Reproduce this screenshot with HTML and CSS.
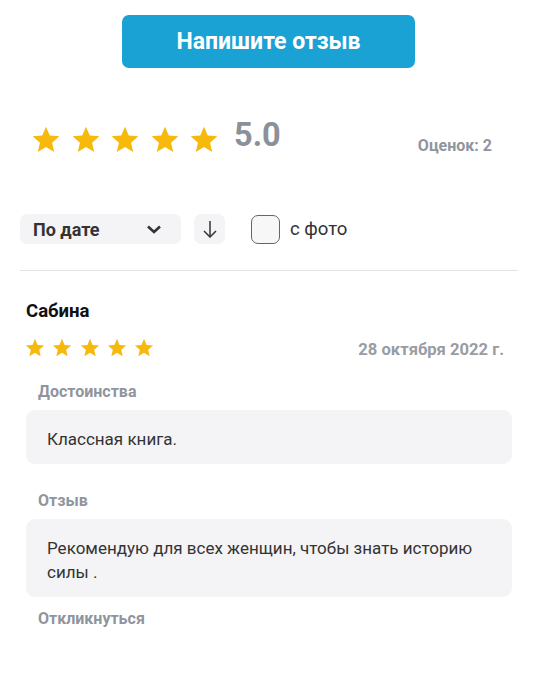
FILE: index.html
```html
<!DOCTYPE html>
<html lang="ru">
<head>
  <meta charset="UTF-8">
  <meta name="viewport" content="width=device-width, initial-scale=1.0">
  <title>Отзывы</title>
  <link rel="stylesheet" href="styles.css">
</head>
<body>
  <button class="btnOtzyv">Напишите отзыв</button>

  <div class="itog">
    <div class="zvezdy">
      <svg class="zvezda" viewBox="0 0 24 24"><path d="M12 17.27L18.18 21l-1.64-7.03L22 9.24l-7.19-.61L12 2 9.19 8.63 2 9.24l5.46 4.73L5.82 21z"/></svg>
      <svg class="zvezda" viewBox="0 0 24 24"><path d="M12 17.27L18.18 21l-1.64-7.03L22 9.24l-7.19-.61L12 2 9.19 8.63 2 9.24l5.46 4.73L5.82 21z"/></svg>
      <svg class="zvezda" viewBox="0 0 24 24"><path d="M12 17.27L18.18 21l-1.64-7.03L22 9.24l-7.19-.61L12 2 9.19 8.63 2 9.24l5.46 4.73L5.82 21z"/></svg>
      <svg class="zvezda" viewBox="0 0 24 24"><path d="M12 17.27L18.18 21l-1.64-7.03L22 9.24l-7.19-.61L12 2 9.19 8.63 2 9.24l5.46 4.73L5.82 21z"/></svg>
      <svg class="zvezda" viewBox="0 0 24 24"><path d="M12 17.27L18.18 21l-1.64-7.03L22 9.24l-7.19-.61L12 2 9.19 8.63 2 9.24l5.46 4.73L5.82 21z"/></svg>
    </div>
    <span class="reiting">5.0</span>
    <span class="ocenok">Оценок: 2</span>
  </div>

  <div class="filtr">
    <div class="sortirovka">
      <span>По дате</span>
      <svg class="strelkaVniz" viewBox="0 0 16 9"><polyline points="2,1.5 8,7 14,1.5"/></svg>
    </div>
    <div class="poryadok">
      <svg viewBox="0 0 16 18"><line x1="8" y1="1" x2="8" y2="17"/><polyline points="2,11 8,17 14,11"/></svg>
    </div>
    <label class="sFoto">
      <span class="kvadrat"></span>
      <span>с фото</span>
    </label>
  </div>

  <div class="liniya"></div>

  <div class="otzyv">
    <div class="imya">Сабина</div>
    <div class="stroka">
      <div class="zvezdyMal">
        <svg class="zvezdaMal" viewBox="0 0 24 24"><path d="M12 17.27L18.18 21l-1.64-7.03L22 9.24l-7.19-.61L12 2 9.19 8.63 2 9.24l5.46 4.73L5.82 21z"/></svg>
        <svg class="zvezdaMal" viewBox="0 0 24 24"><path d="M12 17.27L18.18 21l-1.64-7.03L22 9.24l-7.19-.61L12 2 9.19 8.63 2 9.24l5.46 4.73L5.82 21z"/></svg>
        <svg class="zvezdaMal" viewBox="0 0 24 24"><path d="M12 17.27L18.18 21l-1.64-7.03L22 9.24l-7.19-.61L12 2 9.19 8.63 2 9.24l5.46 4.73L5.82 21z"/></svg>
        <svg class="zvezdaMal" viewBox="0 0 24 24"><path d="M12 17.27L18.18 21l-1.64-7.03L22 9.24l-7.19-.61L12 2 9.19 8.63 2 9.24l5.46 4.73L5.82 21z"/></svg>
        <svg class="zvezdaMal" viewBox="0 0 24 24"><path d="M12 17.27L18.18 21l-1.64-7.03L22 9.24l-7.19-.61L12 2 9.19 8.63 2 9.24l5.46 4.73L5.82 21z"/></svg>
      </div>
      <span class="data">28 октября 2022 г.</span>
    </div>

    <div class="zagolovok zagPervyi">Достоинства</div>
    <div class="tekst">Классная книга.</div>

    <div class="zagolovok">Отзыв</div>
    <div class="tekst">Рекомендую для всех женщин, чтобы знать историю силы .</div>

    <div class="zagolovok otkliknutsya">Откликнуться</div>
  </div>
</body>
</html>
```

FILE: styles.css
```css
body {
    margin: 0;
    background: white;
    font-family: Roboto, "Noto Sans", sans-serif;
    color: #333;
}
.btnOtzyv {
    display: block;
    width: 293px;
    height: 53px;
    margin: 15px auto 0;
    padding: 0;
    border: none;
    border-radius: 7px;
    background: #19a2d3;
    color: white;
    font-family: Roboto, sans-serif;
    font-size: 23px;
    font-weight: 700;
}
.itog {
    display: flex;
    align-items: flex-start;
    margin-top: 56px;
    padding-left: 30px;
    padding-right: 45px;
    height: 32px;
}
.zvezdy { display: flex; gap: 7.5px; }
.zvezda { width: 32px; height: 32px; fill: #f6b90c; }
.reiting {
    margin-left: 14px;
    margin-top: -5px;
    font-size: 32.5px;
    line-height: 32px;
    font-weight: 700;
    color: #8b9099;
}
.ocenok {
    margin-left: auto;
    margin-top: 12px;
    font-size: 16px;
    line-height: 20px;
    font-weight: 700;
    color: #90959d;
}
.filtr {
    display: flex;
    align-items: center;
    margin-top: 58px;
    padding-left: 20px;
    height: 30px;
}
.sortirovka {
    display: flex;
    align-items: center;
    justify-content: space-between;
    box-sizing: border-box;
    width: 161px;
    height: 30px;
    padding: 1px 19px 0 13px;
    border-radius: 7px;
    background: #f4f4f6;
    font-size: 18px;
    font-weight: 700;
    color: #333;
}
.strelkaVniz {
    width: 16px;
    height: 9px;
    fill: none;
    stroke: #333;
    stroke-width: 2.6;
}
.poryadok {
    display: flex;
    align-items: center;
    justify-content: center;
    width: 31px;
    height: 30px;
    margin-left: 13px;
    border-radius: 7px;
    background: #f4f4f6;
}
.poryadok svg {
    width: 16px;
    height: 18px;
    fill: none;
    stroke: #333;
    stroke-width: 1.5;
}
.sFoto {
    display: flex;
    align-items: center;
    gap: 10px;
    margin-left: 26px;
    font-size: 18.6px;
    color: #333;
}
.kvadrat {
    box-sizing: border-box;
    width: 29px;
    height: 29px;
    border: 1px solid #666;
    border-radius: 7px;
    background: #f7f7f8;
}
.liniya {
    height: 1px;
    margin: 26px 19px 0 20px;
    background: #e4e4e6;
}
.otzyv { padding: 0 25px 0 26px; }
.imya {
    margin-top: 29px;
    font-size: 18.6px;
    line-height: 22px;
    font-weight: 700;
    color: #111;
}
.stroka {
    display: flex;
    align-items: flex-start;
    justify-content: space-between;
    margin-top: 15px;
    height: 22px;
}
.zvezdyMal { display: flex; gap: 5.3px; margin-left: -2px; }
.zvezdaMal { width: 22px; height: 22px; fill: #f6b90c; }
.data {
    margin-top: 2px;
    margin-right: 8px;
    font-size: 16.6px;
    line-height: 22px;
    font-weight: 700;
    color: #999ca3;
}
.zagolovok {
    margin: 27px 0 8px 12px;
    font-size: 16px;
    line-height: 20px;
    font-weight: 700;
    color: #90959d;
}
.zagPervyi { margin-top: 23px; }
.otkliknutsya { margin-top: 12px; }
.tekst {
    padding: 17px 21px 13px;
    border-radius: 9px;
    background: #f4f4f6;
    font-size: 17px;
    line-height: 24px;
    color: #333;
}
```
